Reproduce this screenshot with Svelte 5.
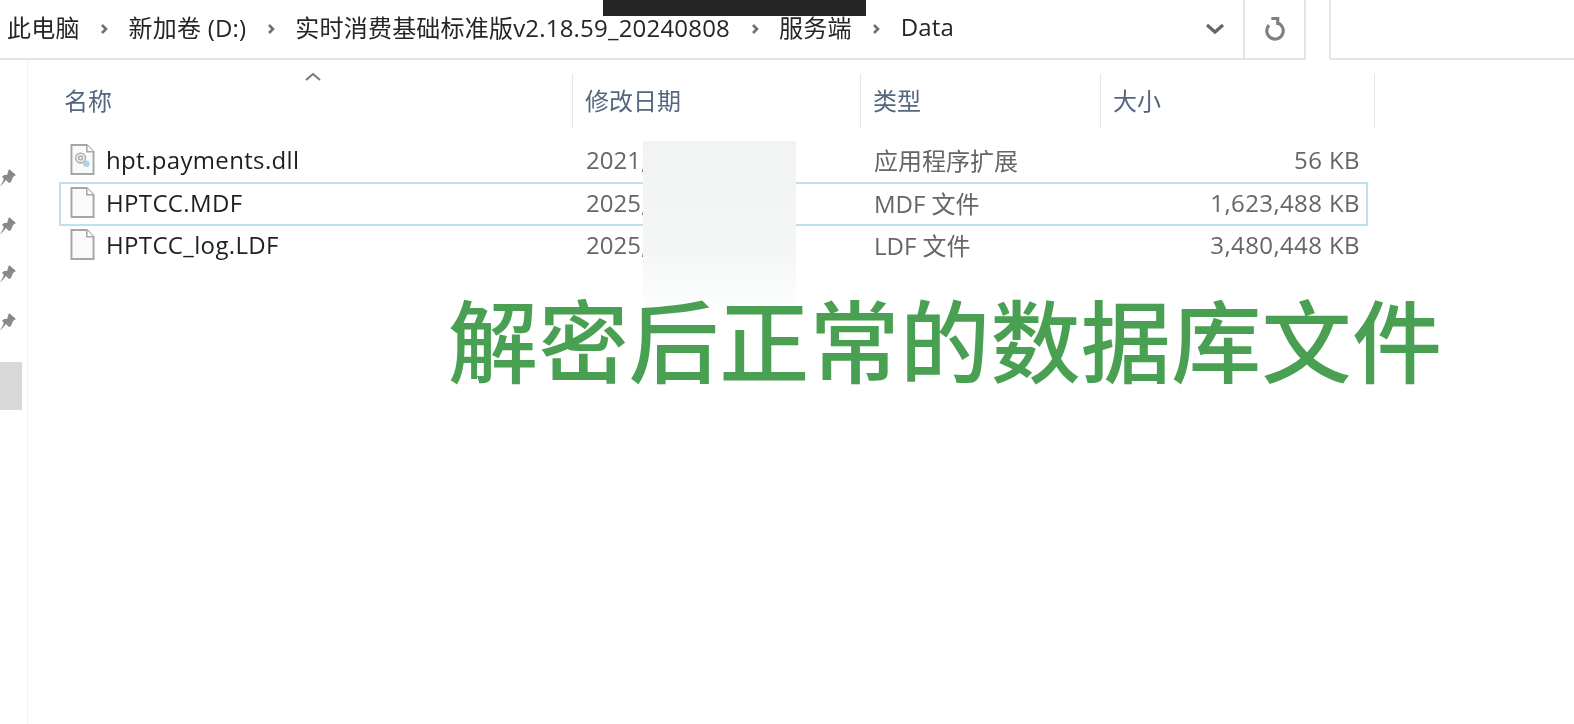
<script lang="ts">
  const crumbs = ['此电脑', '新加卷 (D:)', '实时消费基础标准版v2.18.59_20240808', '服务端', 'Data'];
  const columns = ['名称', '修改日期', '类型', '大小'];
  const files = [
    { name: 'hpt.payments.dll', date: '2021,', type: '应用程序扩展', size: '56 KB', dll: true },
    { name: 'HPTCC.MDF', date: '2025,', type: 'MDF 文件', size: '1,623,488 KB', selected: true },
    { name: 'HPTCC_log.LDF', date: '2025,', type: 'LDF 文件', size: '3,480,448 KB' }
  ];
</script>

<div class="window">
  <header class="toolbar">
    <nav class="address">
      <div class="crumbs">
        {#each crumbs as crumb, i}
          {#if i > 0}
            <svg class="sep" viewBox="0 0 10 14"><path d="M3 3l4 4-4 4" /></svg>
          {/if}
          <span>{crumb}</span>
        {/each}
      </div>
      <svg class="drop" viewBox="0 0 20 12"><path d="M2 2l8 7 8-7" /></svg>
      <button class="refresh" aria-label="刷新">
        <svg viewBox="0 0 24 26"><path d="M14 6.2a9 9 0 1 1-8.5 2.5M8 1.5h7v7" /></svg>
      </button>
    </nav>
    <div class="search"></div>
  </header>

  <div class="body">
    <aside class="side">
      <div class="pins">
        {#each [0, 1, 2, 3] as p (p)}
          <svg viewBox="0 0 16 18"><path d="M9 0l7 6-3 2-2 5-2 1-3-3-6 7 4-8-2-2 2-2 3 0z" /></svg>
        {/each}
      </div>
      <div class="active"></div>
    </aside>

    <main class="list">
      <div class="sort"><svg viewBox="0 0 18 10"><path d="M2 8l7-6 7 6" /></svg></div>
      <div class="head">
        {#each columns as col}
          <div class="col">{col}</div>
        {/each}
      </div>
      <div class="rows">
        {#each files as f}
          <div class="row" class:selected={f.selected}>
            <div class="cell name">
              <svg class="file" viewBox="0 0 26 33">
                <path class="sheet" d="M1.5 1.5h16l7 7v23h-23z" />
                <path class="fold" d="M17.5 1.5v7h7" />
                {#if f.dll}
                  <circle class="gear" cx="11" cy="15" r="5" />
                  <circle class="gear" cx="11" cy="15" r="2" />
                  <circle class="gear2" cx="17" cy="21" r="3.4" />
                {/if}
              </svg>
              <span>{f.name}</span>
            </div>
            <div class="cell meta">{f.date}</div>
            <div class="cell meta">{f.type}</div>
            <div class="cell meta size">{f.size}</div>
          </div>
        {/each}
      </div>
    </main>
  </div>

  <div class="redact"></div>
  <div class="smudge"></div>
  <div class="caption">解密后正常的数据库文件</div>
</div>

<style>
  :global(body) {
    margin: 0;
    background: #fff;
  }

  .window {
    position: relative;
    width: 1574px;
    height: 724px;
    overflow: hidden;
    background: #fff;
    font-family: 'Open Sans', 'Noto Sans CJK SC', sans-serif;
    font-size: 24px;
    color: #262626;
  }

  .toolbar {
    display: flex;
    gap: 23px;
    height: 60px;
  }

  .address {
    display: flex;
    align-items: center;
    width: 1306px;
    flex: none;
    box-sizing: border-box;
    border-right: 2px solid #e4e4e4;
    border-bottom: 2px solid #e4e4e4;
    border-radius: 0 0 2px 0;
  }

  .crumbs {
    flex: 1;
    display: flex;
    align-items: center;
    gap: 19.5px;
    padding-left: 7px;
    padding-bottom: 5px;
    letter-spacing: 0.2px;
    white-space: nowrap;
    filter: blur(0.6px);
  }

  .sep {
    width: 10px;
    height: 14px;
    margin-top: 4px;
  }

  .sep path {
    fill: none;
    stroke: #707070;
    stroke-width: 2.6;
  }

  .drop {
    width: 20px;
    height: 12px;
    margin-right: 18px;
    filter: blur(0.5px);
  }

  .drop path {
    fill: none;
    stroke: #666;
    stroke-width: 3.2;
  }

  .refresh {
    width: 61px;
    height: 100%;
    padding: 0;
    display: flex;
    align-items: center;
    justify-content: center;
    background: none;
    border: 0;
    border-left: 2px solid #e4e4e4;
  }

  .refresh svg {
    width: 22px;
    height: 24px;
    filter: blur(0.5px);
  }

  .refresh path {
    fill: none;
    stroke: #808080;
    stroke-width: 3.4;
  }

  .search {
    flex: 1;
    border-left: 2px solid #e4e4e4;
    border-bottom: 2px solid #e4e4e4;
    border-radius: 0 0 0 3px;
  }

  .body {
    display: flex;
    height: 664px;
  }

  .side {
    width: 28px;
    flex: none;
    box-sizing: border-box;
    border-right: 1px solid #f4f4f4;
  }

  .pins {
    display: flex;
    flex-direction: column;
    gap: 30px;
    padding-top: 109px;
  }

  .pins svg {
    width: 16px;
    height: 18px;
    fill: #858a8a;
    filter: blur(0.7px);
  }

  .active {
    width: 22px;
    height: 48px;
    margin-top: 31px;
    background: #d9d9d9;
  }

  .list {
    position: relative;
    flex: 1;
    min-width: 0;
  }

  .sort {
    position: absolute;
    left: 276px;
    top: 12px;
    width: 18px;
    height: 10px;
    display: flex;
    filter: blur(0.4px);
  }

  .sort path {
    fill: none;
    stroke: #777;
    stroke-width: 2;
  }

  .head {
    display: grid;
    grid-template-columns: 545px 288px 240px 274px;
    height: 54px;
    margin-top: 14px;
  }

  .col {
    display: flex;
    align-items: center;
    padding-left: 12px;
    padding-bottom: 4px;
    border-right: 1px solid #e5e5e5;
    color: #55677f;
    filter: blur(0.6px);
  }

  .col:first-child {
    padding-left: 36px;
  }

  .rows {
    margin-top: 12px;
    display: flex;
    flex-direction: column;
  }

  .row {
    display: grid;
    height: 42px;
    box-sizing: border-box;
    align-items: center;
    border: 2px solid transparent;
    margin-left: 31px;
    width: 1309px;
    grid-template-columns: 512px 288px 240px 265px;
  }

  .row.selected {
    height: 44px;
    margin-bottom: -1px;
    border-color: #bfdff3;
  }

  .cell {
    white-space: nowrap;
    padding-bottom: 3px;
    filter: blur(0.6px);
  }

  .name {
    display: flex;
    align-items: center;
    gap: 11px;
    padding-left: 9px;
    letter-spacing: 0.35px;
    color: #1f1f1f;
  }

  .file {
    width: 25px;
    height: 33px;
    flex: none;
  }

  .sheet {
    fill: #fafafa;
    stroke: #a6a6a6;
    stroke-width: 2;
  }

  .fold {
    fill: #fff;
    stroke: #a6a6a6;
    stroke-width: 1.6;
  }

  .gear {
    fill: none;
    stroke: #a9adb0;
    stroke-width: 1.6;
  }

  .gear2 {
    fill: #a9d3e6;
  }

  .meta {
    color: #666;
    padding-left: 13px;
  }

  .size {
    text-align: right;
    padding-left: 0;
    padding-right: 6px;
    letter-spacing: 0.4px;
  }

  /* redaction box and screenshot annotations painted on top */
  .redact {
    position: absolute;
    left: 603px;
    top: 0;
    width: 263px;
    height: 16px;
    background: #262626;
  }

  .smudge {
    position: absolute;
    left: 643px;
    top: 141px;
    width: 153px;
    height: 175px;
    background: linear-gradient(#f2f4f4, #f4f6f6 60%, #fbfcfc 90%, #fff);
  }

  .caption {
    position: absolute;
    left: 448px;
    top: 282px;
    line-height: 110px;
    font-family: 'Noto Sans CJK SC', sans-serif;
    font-size: 90px;
    font-weight: 500;
    letter-spacing: 0.4px;
    color: #4aa052;
    white-space: nowrap;
  }
</style>
